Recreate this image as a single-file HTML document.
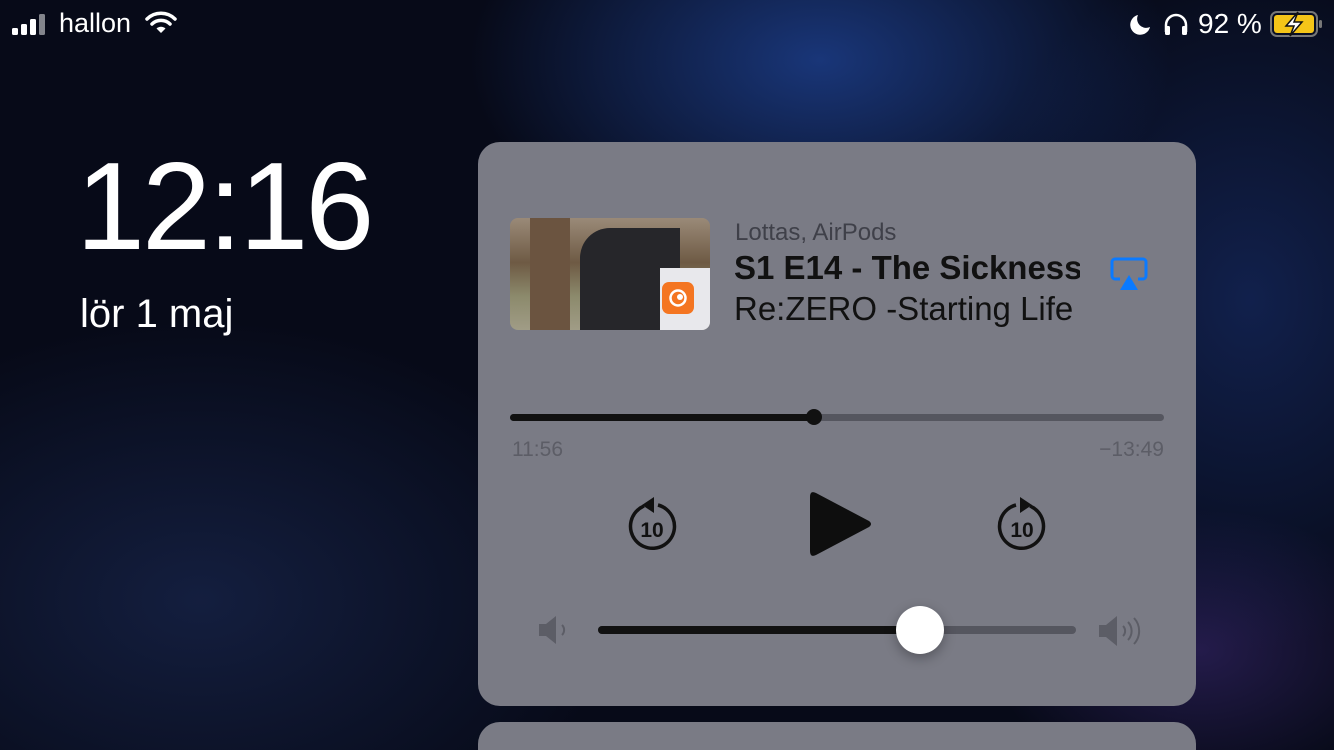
<!DOCTYPE html>
<html><head><meta charset="utf-8"><style>
*{margin:0;padding:0;box-sizing:border-box}
html{width:1334px;height:750px;overflow:hidden}
body{width:1334px;height:750px;overflow:hidden;position:relative;font-family:"Liberation Sans",sans-serif;
background:
radial-gradient(ellipse 500px 300px at 820px 60px,rgba(40,90,200,.55),transparent 70%),
radial-gradient(ellipse 400px 500px at 1250px 300px,rgba(30,60,140,.45),transparent 70%),
radial-gradient(ellipse 600px 400px at 200px 600px,rgba(35,55,110,.45),transparent 70%),
radial-gradient(ellipse 300px 200px at 1200px 650px,rgba(90,60,170,.35),transparent 70%),
#070a18;}
.sb{position:absolute;top:8px;color:#fff;font-size:27px}
.panel{position:absolute;left:478px;top:142px;width:718px;height:564px;border-radius:22px;background:#7a7b85}
.panel2{position:absolute;left:478px;top:722px;width:718px;height:28px;border-radius:22px 22px 0 0;background:#7a7b85}
.abs{position:absolute}
</style></head><body>
<svg class="abs" style="left:12px;top:14px" width="40" height="22"><rect x="0" y="14" width="6" height="7" rx="1.5" fill="#fff"/><rect x="9" y="10" width="6" height="11" rx="1.5" fill="#fff"/><rect x="18" y="5" width="6" height="16" rx="1.5" fill="#fff"/><rect x="27" y="0" width="6" height="21" rx="1.5" fill="#fff" opacity=".5"/></svg>
<div class="sb" style="left:59px">hallon</div>
<svg class="abs" style="left:145px;top:11px" width="32" height="24" viewBox="0 0 32 24"><path d="M2 8a20 20 0 0 1 28 0" stroke="#fff" stroke-width="3.5" fill="none" stroke-linecap="round"/><path d="M7 13a13 13 0 0 1 18 0" stroke="#fff" stroke-width="3.5" fill="none" stroke-linecap="round"/><path d="M16 22l-4.5-4.5a6.5 6.5 0 0 1 9 0z" fill="#fff"/></svg>
<svg class="abs" style="left:1128px;top:13px" width="24" height="24" viewBox="0 0 24 24"><path d="M10 2a10 10 0 1 0 12 12A9 9 0 0 1 10 2z" fill="#fff"/></svg>
<svg class="abs" style="left:1163px;top:12px" width="26" height="24" viewBox="0 0 26 24"><path d="M3 20v-7a10 10 0 0 1 20 0v7" stroke="#fff" stroke-width="2.5" fill="none"/><rect x="2" y="14" width="5" height="9" rx="1.5" fill="#fff"/><rect x="19" y="14" width="5" height="9" rx="1.5" fill="#fff"/></svg>
<div class="sb" style="left:1198px;font-size:28px">92 %</div>
<svg class="abs" style="left:1270px;top:11px" width="54" height="26" viewBox="0 0 54 26"><rect x="1" y="1" width="46" height="24" rx="6" fill="none" stroke="#777" stroke-width="2"/><rect x="4" y="4" width="40" height="18" rx="3" fill="#f5c518"/><rect x="49" y="9" width="3" height="8" rx="1.5" fill="#777"/><path d="M28 1L16 15h8l-4 10 12-14h-8z" fill="#fff" stroke="#111" stroke-width="1.5"/></svg>
<div class="abs" style="left:76px;top:145px;color:#fff;font-size:124px;line-height:1;letter-spacing:-3px;font-family:'DejaVu Sans ExtraLight','Liberation Sans',sans-serif;font-weight:200">12:16</div>
<div class="abs" style="left:80px;top:292px;color:#fff;font-size:40px">lör 1 maj</div>
<div class="panel"></div>
<div class="panel2"></div>
<div class="abs" style="left:510px;top:218px;width:200px;height:112px;border-radius:8px;overflow:hidden;background:linear-gradient(180deg,#9a8a78 0%,#6e5a44 40%,#8c8a6c 70%,#a09c86 100%)">
 <div class="abs" style="left:20px;top:0;width:40px;height:112px;background:#6b5440"></div>
 <div class="abs" style="left:70px;top:10px;width:100px;height:102px;background:#26262a;border-radius:30px 0 0 0"></div>
 <div class="abs" style="left:150px;top:50px;width:50px;height:62px;background:#e8e8ec"></div>
 <div class="abs" style="left:152px;top:64px;width:32px;height:32px;border-radius:7px;background:#f47521"></div>
 <svg class="abs" style="left:158px;top:70px" width="20" height="20" viewBox="0 0 20 20"><circle cx="10" cy="10" r="7.5" fill="none" stroke="#fff" stroke-width="2.5"/><circle cx="12" cy="9" r="3" fill="#fff"/></svg>
</div>
<div class="abs" style="left:735px;top:219px;color:#3f4049;font-size:24px">Lottas, AirPods</div>
<div class="abs" style="left:734px;top:249px;color:#111;font-size:33px;font-weight:bold;white-space:nowrap;width:346px;overflow:hidden">S1 E14 - The Sickness</div>
<div class="abs" style="left:734px;top:290px;color:#111;font-size:33px;white-space:nowrap;width:346px;overflow:hidden">Re:ZERO -Starting Life</div>
<svg class="abs" style="left:1110px;top:257px" width="38" height="34" viewBox="0 0 38 34"><path d="M10 22H5a3 3 0 0 1-3-3V5a3 3 0 0 1 3-3h28a3 3 0 0 1 3 3v14a3 3 0 0 1-3 3h-5" fill="none" stroke="#0a7aff" stroke-width="3"/><path d="M19 18l9 15H10z" fill="#0a7aff"/></svg>
<div class="abs" style="left:510px;top:414px;width:654px;height:7px;border-radius:4px;background:#55565f"></div>
<div class="abs" style="left:510px;top:414px;width:304px;height:7px;border-radius:4px;background:#111"></div>
<div class="abs" style="left:806px;top:409px;width:16px;height:16px;border-radius:50%;background:#111"></div>
<div class="abs" style="left:512px;top:438px;color:#5c5d66;font-size:21px">11:56</div>
<div class="abs" style="left:1000px;width:164px;text-align:right;top:438px;color:#5c5d66;font-size:21px">−13:49</div>
<svg class="abs" style="left:624px;top:495px" width="56" height="58" viewBox="0 0 56 58"><path d="M20 11A22 22 0 1 0 34 10" fill="none" stroke="#111" stroke-width="3.5"/><path d="M30 2v16l-12-8z" fill="#111"/><text x="28" y="42" text-anchor="middle" font-family="Liberation Sans" font-weight="bold" font-size="21" fill="#111">10</text></svg>
<svg class="abs" style="left:994px;top:495px" width="56" height="58" viewBox="0 0 56 58"><path d="M36 11A22 22 0 1 1 22 10" fill="none" stroke="#111" stroke-width="3.5"/><path d="M26 2v16l12-8z" fill="#111"/><text x="28" y="42" text-anchor="middle" font-family="Liberation Sans" font-weight="bold" font-size="21" fill="#111">10</text></svg>
<svg class="abs" style="left:808px;top:489px" width="64" height="70" viewBox="0 0 64 70"><path d="M8 4Q2 1 2 8v54q0 7 6 4l53-28q4-3 0-6z" fill="#0e0e0e"/></svg>
<svg class="abs" style="left:537px;top:615px" width="34" height="30" viewBox="0 0 34 30"><path d="M2 9h7l10-8v28l-10-8H2z" fill="#5c5d66"/><path d="M25 10a7 7 0 0 1 0 10" fill="none" stroke="#5c5d66" stroke-width="2"/></svg>
<div class="abs" style="left:598px;top:626px;width:478px;height:8px;border-radius:4px;background:#55565f"></div>
<div class="abs" style="left:598px;top:626px;width:322px;height:8px;border-radius:4px;background:#111"></div>
<div class="abs" style="left:896px;top:606px;width:48px;height:48px;border-radius:50%;background:#fff;box-shadow:0 4px 12px rgba(0,0,0,.3)"></div>
<svg class="abs" style="left:1097px;top:612px" width="48" height="38" viewBox="0 0 48 38"><path d="M2 13h7l11-9v30l-11-9H2z" fill="#5c5d66"/><path d="M26 14a7 7 0 0 1 0 10M31 10a13 13 0 0 1 0 18M37 6a19 19 0 0 1 0 26" fill="none" stroke="#5c5d66" stroke-width="2"/></svg>
</body></html>
